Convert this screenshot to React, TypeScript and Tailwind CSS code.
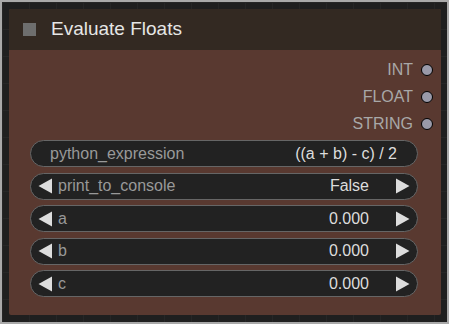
import React from "react";

const font = { fontFamily: '"Liberation Sans", Arial, sans-serif' };

function LeftArrow() {
  return (
    <svg width="15" height="16" viewBox="0 0 15 16" className="shrink-0">
      <polygon points="14,0.5 14,15.5 0.5,8" fill="#dddddd" />
    </svg>
  );
}

function RightArrow() {
  return (
    <svg width="15" height="16" viewBox="0 0 15 16" className="shrink-0">
      <polygon points="1,0.5 1,15.5 14.5,8" fill="#dddddd" />
    </svg>
  );
}

function Output({ label }: { label: string }) {
  return (
    <div className="flex h-[27px] items-center justify-end gap-[8px] pr-[8px]">
      <span className="text-[16px] text-[#a8a8a8]">{label}</span>
      <span className="h-[12px] w-[12px] rounded-full border-[1.5px] border-black bg-[#9a9aa9]" />
    </div>
  );
}

function TextWidget({ label, value }: { label: string; value: string }) {
  return (
    <div className="flex h-[27px] items-center justify-between rounded-full border border-[#666] bg-[#222] pl-[19px] pr-[20px] text-[16px]">
      <span className="text-[#999]">{label}</span>
      <span className="text-[#ddd]">{value}</span>
    </div>
  );
}

function ComboWidget({ label, value }: { label: string; value: string }) {
  return (
    <div className="flex h-[27px] items-center rounded-full border border-[#666] bg-[#222] pl-[7px] pr-[7px] text-[16px]">
      <LeftArrow />
      <span className="ml-[5px] text-[#999]">{label}</span>
      <span className="ml-auto mr-[26px] text-[#ddd]">{value}</span>
      <RightArrow />
    </div>
  );
}

export default function App() {
  return (
    <div
      className="h-[324px] w-[449px] overflow-hidden border-2 border-[#a9a9a9] bg-[#1f1f1f] bg-[linear-gradient(to_right,#262626_1px,transparent_1px),linear-gradient(to_bottom,#262626_1px,transparent_1px)] bg-[size:27px_27px] pl-[7px] pt-[7px]"
      style={font}
    >
      <div className="flex h-[306px] w-[432px] flex-col overflow-hidden rounded-[2px] bg-[#593930]">
        {/* title bar */}
        <div className="flex h-[41px] shrink-0 items-center bg-[#332922] pl-[14px]">
          <span className="h-[13px] w-[13px] bg-[#6e6e6e]" />
          <span className="ml-[15px] text-[19px] text-[#e6e6e6]">Evaluate Floats</span>
        </div>

        {/* outputs */}
        <div className="flex flex-col pt-[6px]">
          <Output label="INT" />
          <Output label="FLOAT" />
          <Output label="STRING" />
        </div>

        {/* widgets */}
        <div className="mt-[3px] ml-[21px] mr-[23px] flex flex-col gap-[5.5px]">
          <TextWidget label="python_expression" value="((a + b) - c) / 2" />
          <ComboWidget label="print_to_console" value="False" />
          <ComboWidget label="a" value="0.000" />
          <ComboWidget label="b" value="0.000" />
          <ComboWidget label="c" value="0.000" />
        </div>
      </div>
    </div>
  );
}
